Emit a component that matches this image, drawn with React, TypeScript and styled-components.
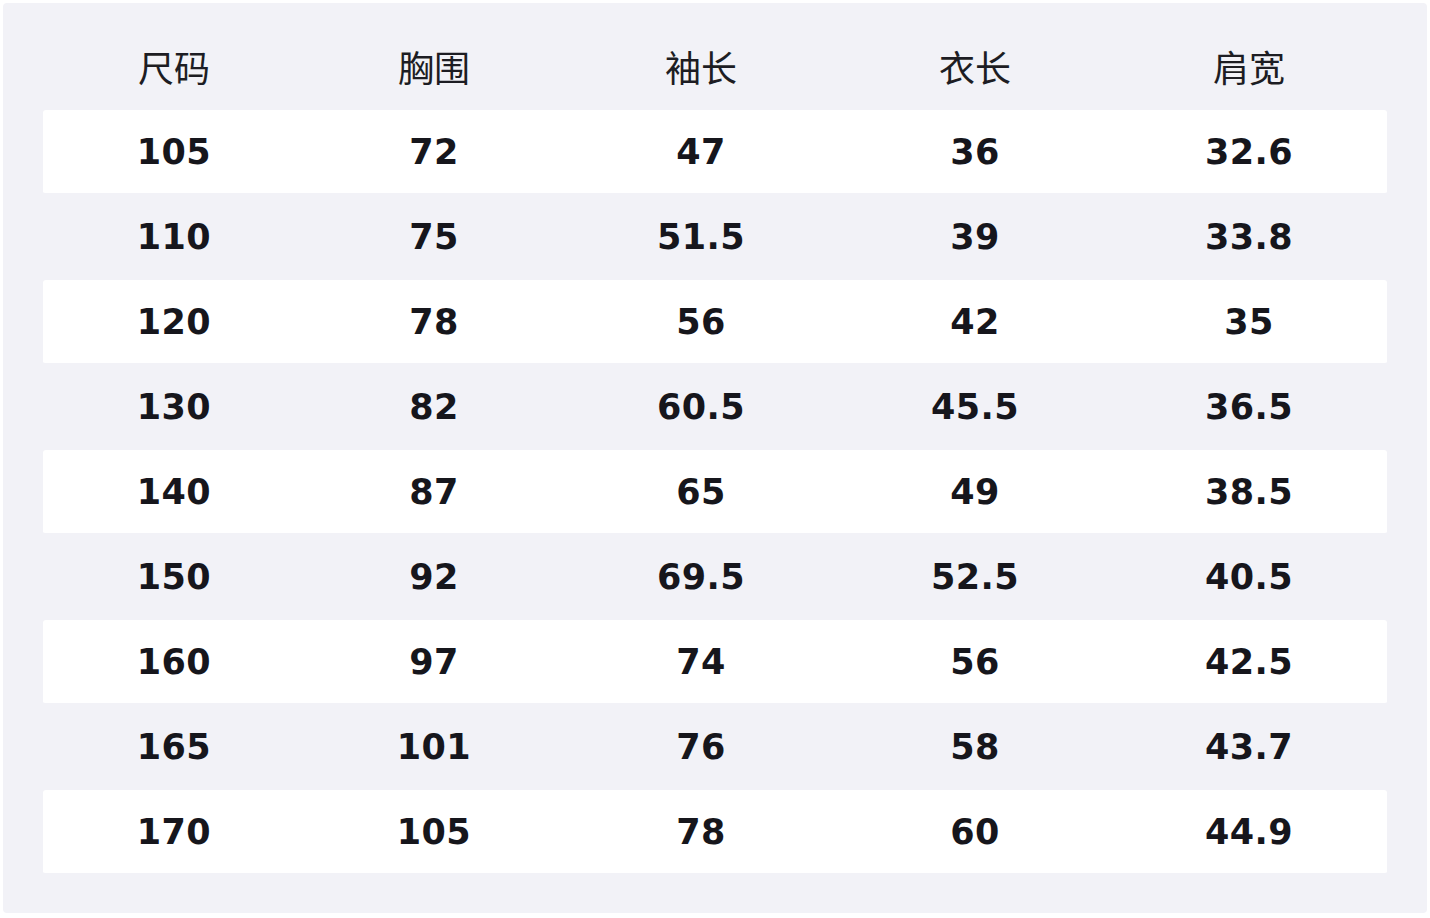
import { createGlobalStyle } from 'styled-components';
import styled from 'styled-components';

const GlobalStyle = createGlobalStyle`
  html, body {
    margin: 0;
    padding: 0;
    background: #ffffff;
  }
  body {
    padding: 3px;
    font-family: "DejaVu Sans", "Noto Sans CJK SC", sans-serif;
  }
`;

const Panel = styled.div`
  width: 1424px;
  height: 910px;
  box-sizing: border-box;
  background: #f2f2f7;
  border-radius: 4px;
  padding: 0 40px 40px;
`;

const Grid = styled.div`
  display: grid;
  grid-template-columns: 262px 258px 276px 272px 276px;
  align-items: center;
`;

const HeaderRow = styled(Grid)`
  height: 107px;
  box-sizing: border-box;
  padding-top: 18px;
`;

const HeaderCell = styled.div`
  text-align: center;
  font-family: "Noto Sans CJK SC", "DejaVu Sans", sans-serif;
  font-size: 36px;
  font-weight: 400;
  color: #1d1d23;
  line-height: 1;
`;

const BodyRow = styled(Grid)<{ $striped: boolean }>`
  height: 85px;
  padding-bottom: 2px;
  box-sizing: border-box;
  background: ${({ $striped }) => ($striped ? '#ffffff' : 'transparent')};
  background-clip: content-box;
  border-radius: 3px;
`;

const Cell = styled.div`
  text-align: center;
  padding-top: 2px;
  font-size: 35px;
  font-weight: 700;
  color: #16161c;
  line-height: 1;
  letter-spacing: 0.4px;
`;

const headers = ['尺码', '胸围', '袖长', '衣长', '肩宽'];

const rows = [
  ['105', '72', '47', '36', '32.6'],
  ['110', '75', '51.5', '39', '33.8'],
  ['120', '78', '56', '42', '35'],
  ['130', '82', '60.5', '45.5', '36.5'],
  ['140', '87', '65', '49', '38.5'],
  ['150', '92', '69.5', '52.5', '40.5'],
  ['160', '97', '74', '56', '42.5'],
  ['165', '101', '76', '58', '43.7'],
  ['170', '105', '78', '60', '44.9'],
];

export default function App() {
  return (
    <>
      <GlobalStyle />
      <Panel>
        <HeaderRow>
          {headers.map((h) => (
            <HeaderCell key={h}>{h}</HeaderCell>
          ))}
        </HeaderRow>
        {rows.map((r, i) => (
          <BodyRow key={r[0]} $striped={i % 2 === 0}>
            {r.map((v, j) => (
              <Cell key={j}>{v}</Cell>
            ))}
          </BodyRow>
        ))}
      </Panel>
    </>
  );
}
